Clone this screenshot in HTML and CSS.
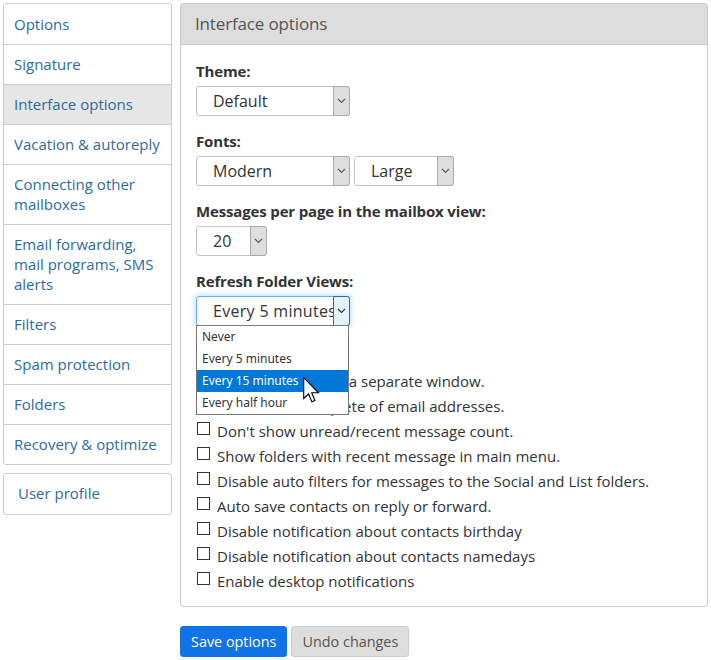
FILE: index.html
```html
<!DOCTYPE html>
<html lang="en">
<head>
<meta charset="utf-8">
<title>Interface options</title>
<link rel="stylesheet" href="styles.css">
</head>
<body>
<div class="page">
  <nav class="side">
    <ul class="menu">
      <li><a href="#">Options</a></li>
      <li><a href="#">Signature</a></li>
      <li class="active"><a href="#">Interface options</a></li>
      <li><a href="#">Vacation &amp; autoreply</a></li>
      <li><a href="#">Connecting other<br>mailboxes</a></li>
      <li><a href="#">Email forwarding,<br>mail programs, SMS<br>alerts</a></li>
      <li><a href="#">Filters</a></li>
      <li><a href="#">Spam protection</a></li>
      <li><a href="#">Folders</a></li>
      <li><a href="#">Recovery &amp; optimize</a></li>
    </ul>
    <ul class="menu profile">
      <li><a href="#">User profile</a></li>
    </ul>
  </nav>

  <main class="content">
    <section class="panel">
      <div class="panel-head">Interface options</div>
      <div class="panel-body">
        <div class="field">
          <div class="label">Theme:</div>
          <div class="selects">
            <div class="select w-wide"><span class="value">Default</span><span class="arrow"><svg width="9" height="6" viewBox="0 0 9 6"><polyline points="1,1 4.5,4.5 8,1" fill="none" stroke="#555" stroke-width="1.1"/></svg></span></div>
          </div>
        </div>
        <div class="field">
          <div class="label">Fonts:</div>
          <div class="selects">
            <div class="select w-wide"><span class="value">Modern</span><span class="arrow"><svg width="9" height="6" viewBox="0 0 9 6"><polyline points="1,1 4.5,4.5 8,1" fill="none" stroke="#555" stroke-width="1.1"/></svg></span></div>
            <div class="select w-mid"><span class="value">Large</span><span class="arrow"><svg width="9" height="6" viewBox="0 0 9 6"><polyline points="1,1 4.5,4.5 8,1" fill="none" stroke="#555" stroke-width="1.1"/></svg></span></div>
          </div>
        </div>
        <div class="field">
          <div class="label">Messages per page in the mailbox view:</div>
          <div class="selects">
            <div class="select w-small"><span class="value">20</span><span class="arrow"><svg width="9" height="6" viewBox="0 0 9 6"><polyline points="1,1 4.5,4.5 8,1" fill="none" stroke="#555" stroke-width="1.1"/></svg></span></div>
          </div>
        </div>
        <div class="field">
          <div class="label">Refresh Folder Views:</div>
          <div class="selects">
            <div class="select w-wide focused"><span class="value wide-text">Every 5 minutes</span><span class="arrow"><svg width="9" height="6" viewBox="0 0 9 6"><polyline points="1,1 4.5,4.5 8,1" fill="none" stroke="#333" stroke-width="1.1"/></svg></span>
              <ul class="dropdown">
                <li>Never</li>
                <li>Every 5 minutes</li>
                <li class="hover">Every 15 minutes</li>
                <li>Every half hour</li>
              </ul>
              <svg class="cursor" width="18" height="27" viewBox="0 0 13 19.5"><path d="M0.5,0.5 L0.5,15.5 L4,12.3 L6.4,17.9 L8.6,17 L6.3,11.4 L11.2,11.4 Z" fill="#fff" stroke="#000" stroke-width="0.8" stroke-linejoin="miter"/></svg>
            </div>
          </div>
        </div>

        <ul class="checks">
          <li><span class="box"></span>Open messages in a separate window.</li>
          <li><span class="box"></span>Enable autocomplete of email addresses.</li>
          <li><span class="box"></span>Don't show unread/recent message count.</li>
          <li><span class="box"></span>Show folders with recent message in main menu.</li>
          <li><span class="box"></span>Disable auto filters for messages to the Social and List folders.</li>
          <li><span class="box"></span>Auto save contacts on reply or forward.</li>
          <li><span class="box"></span>Disable notification about contacts birthday</li>
          <li><span class="box"></span>Disable notification about contacts namedays</li>
          <li><span class="box"></span>Enable desktop notifications</li>
        </ul>
      </div>
    </section>

    <div class="actions">
      <button class="btn primary" type="button">Save options</button>
      <button class="btn" type="button">Undo changes</button>
    </div>
  </main>
</div>
</body>
</html>
```

FILE: styles.css
```css
* { box-sizing: border-box; }

html, body {
  margin: 0;
  padding: 0;
  background: #fff;
}

body {
  font-family: "Open Sans", "Liberation Sans", Arial, sans-serif;
  font-size: 15px;
  color: #333;
}

.page {
  display: flex;
  align-items: flex-start;
  gap: 8px;
  padding: 3px;
}

/* Sidebar */
.side {
  width: 169px;
  flex: none;
  display: flex;
  flex-direction: column;
  gap: 8px;
}

.menu {
  list-style: none;
  margin: 0;
  padding: 0;
  border: 1px solid #ccc;
  border-radius: 3px;
  overflow: hidden;
}

.menu li {
  border-top: 1px solid #ccc;
}

.menu li:first-child {
  border-top: none;
}

.menu a {
  display: block;
  padding: 9px 10px 10px;
  line-height: 20px;
  color: #2c6b9d;
  text-decoration: none;
}

.menu li:first-child a {
  padding-top: 10px;
}

.menu li.active a {
  background: #e6e6e6;
}

.profile li:first-child a {
  padding: 9px 14px 11px;
}

/* Main */
.content {
  width: 528px;
  flex: none;
  display: flex;
  flex-direction: column;
  gap: 19px;
}

.panel {
  border: 1px solid #ccc;
  border-radius: 3px;
}

.panel-head {
  background: #dddddd;
  border-bottom: 1px solid #ccc;
  padding: 10px 14px 10px;
  line-height: 20px;
  font-size: 17px;
  color: #555;
  letter-spacing: -0.15px;
  border-radius: 2px 2px 0 0;
}

.panel-body {
  padding: 16px 15px 15px;
}

.field {
  margin-bottom: 15px;
}

.label {
  font-weight: bold;
  line-height: 20px;
  margin-bottom: 5px;
  color: #333;
  letter-spacing: -0.15px;
}

.selects {
  display: flex;
  gap: 4px;
}

.select {
  position: relative;
  display: flex;
  height: 30px;
  border: 1px solid #c4c4c4;
  border-radius: 3px;
  background: #fff;
  font-size: 16px;
  color: #333;
}

.select .value {
  flex: 1;
  padding-left: 16px;
  line-height: 28px;
  white-space: nowrap;
  overflow: hidden;
}

.select .value.wide-text {
  letter-spacing: 0.3px;
}

.select .arrow {
  width: 17px;
  flex: none;
  background: #dedede;
  border: 1px solid #aaa;
  margin: -1px -1px -1px 0;
  border-radius: 0 3px 3px 0;
  display: flex;
  align-items: center;
  justify-content: center;
}

.w-wide { width: 154px; }
.w-mid { width: 100px; }
.w-small { width: 71px; }

.select.focused {
  border-color: #66afe9;
  box-shadow: 0 0 6px rgba(102, 175, 233, 0.6);
}

.select.focused .arrow {
  background: #e5f1fb;
  border-color: #0078d7;
}

.dropdown {
  position: absolute;
  left: -1px;
  top: 28px;
  width: 153px;
  margin: 0;
  padding: 0;
  list-style: none;
  background: #fff;
  border: 1px solid #7a7a7a;
  font-family: "Noto Sans", "DejaVu Sans", sans-serif;
  font-size: 12px;
  color: #333;
  z-index: 5;
}

.dropdown li {
  height: 22px;
  line-height: 22px;
  padding-left: 5px;
}

.dropdown li.hover {
  background: #0078d7;
  color: #fff;
}

.cursor {
  position: absolute;
  left: 106px;
  top: 80px;
  z-index: 6;
}

/* Checkboxes */
.checks {
  list-style: none;
  margin: 0;
  padding: 30px 0 0;
}

.checks li {
  display: flex;
  align-items: flex-start;
  line-height: 20px;
  margin-top: 5px;
  white-space: nowrap;
}

.checks li:first-child {
  margin-top: 0;
}

.box {
  width: 13px;
  height: 13px;
  border: 1px solid #333;
  margin: 1px 7px 0 1px;
  flex: none;
  background: #fff;
}

/* Buttons */
.actions {
  display: flex;
  gap: 4px;
}

.btn {
  font-family: inherit;
  font-size: 14.4px;
  height: 31px;
  padding: 0 10px;
  border: 1px solid #ccc;
  border-radius: 3px;
  background: #dddddd;
  color: #555;
  line-height: 29px;
}

.btn.primary {
  background: #1273e6;
  border-color: #1273e6;
  color: #fff;
}
```
